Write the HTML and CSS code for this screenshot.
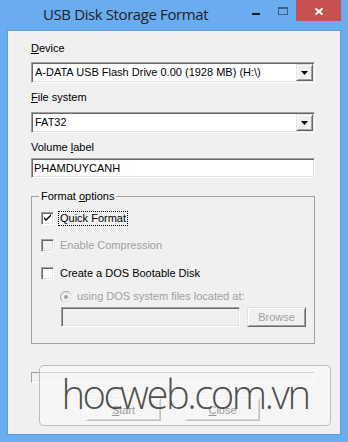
FILE: index.html
```html
<!DOCTYPE html>
<html>
<head>
<meta charset="utf-8">
<link rel="stylesheet" href="styles.css">
</head>
<body>
<div class="window">
  <div class="titlebar">
    <span class="title">USB Disk Storage Format</span>
    <div class="caption">
      <span class="cbtn min"><svg width="26" height="21"><rect x="8" y="13" width="8" height="2" fill="#1e1e1e"/></svg></span>
      <span class="cbtn max"><svg width="26" height="21"><rect x="8.5" y="7.5" width="9" height="7" fill="none" stroke="#3e5f86"/><rect x="8" y="7" width="10" height="2" fill="#3e5f86"/></svg></span>
      <span class="cbtn close"><svg width="45" height="21"><path d="M19.5 8.5 L26.5 14.5 M26.5 8.5 L19.5 14.5" stroke="#fff" stroke-width="2"/></svg></span>
    </div>
  </div>
  <div class="client">
    <div class="form">
      <div class="lbl"><u>D</u>evice</div>
      <div class="combo"><span class="val">A-DATA USB Flash Drive 0.00 (1928 MB) (H:\)</span><span class="drop"><svg width="7" height="4"><polygon points="0,0 7,0 3.5,4" fill="#000"/></svg></span></div>
      <div class="lbl gap8"><u>F</u>ile system</div>
      <div class="combo combo2"><span class="val">FAT32</span><span class="drop"><svg width="7" height="4"><polygon points="0,0 7,0 3.5,4" fill="#000"/></svg></span></div>
      <div class="lbl gap8">Volume <u>l</u>abel</div>
      <div class="textbox">PHAMDUYCANH</div>
      <fieldset class="group">
        <legend>Format <u>o</u>ptions</legend>
        <div class="opt">
          <span class="box"><svg width="9" height="9"><polygon points="1,3 1,5 3,7 8,2 8,0 3,5" fill="#000"/></svg></span>
          <span class="otext focus">Quick Format</span>
        </div>
        <div class="opt opt2 disabled">
          <span class="box boxdis"></span>
          <span class="otext">Enable Compression</span>
        </div>
        <div class="opt opt3">
          <span class="box"></span>
          <span class="otext">Create a DOS Bootable Disk</span>
        </div>
        <div class="radio-row disabled">
          <svg class="radio" width="12" height="12"><circle cx="6" cy="6" r="5.5" fill="#f0f0f0" stroke="#a0a0a0"/><path d="M10 2.5 A5 5 0 0 1 2.5 10" fill="none" stroke="#fff" stroke-width="1"/><circle cx="6" cy="6" r="2" fill="#a0a0a0"/></svg>
          <span>using DOS system files located at:</span>
        </div>
        <div class="path-row">
          <div class="textbox pathbox"></div>
          <div class="btn browse">Browse</div>
        </div>
      </fieldset>
      <div class="progress"></div>
      <div class="buttons">
        <div class="btn main"><u>S</u>tart</div>
        <div class="btn main"><u>C</u>lose</div>
      </div>
    </div>
  </div>
  <div class="watermark">hocweb.com.vn</div>
</div>
</body>
</html>
```
FILE: styles.css
```css
* { box-sizing: border-box; }
body {
  margin: 0;
  width: 348px;
  height: 442px;
  overflow: hidden;
  font-family: "Liberation Sans", Arial, sans-serif;
  font-size: 11px;
  color: #000;
}
.window {
  position: relative;
  width: 348px;
  height: 442px;
  background: #6aacf0;
  display: flex;
  flex-direction: column;
}
.titlebar {
  height: 30px;
  flex: none;
  display: flex;
  align-items: flex-start;
}
.title {
  font-family: "Open Sans", sans-serif;
  font-size: 15px;
  line-height: 21px;
  color: #222;
  padding-left: 43px;
  margin-top: 4px;
  letter-spacing: -0.4px;
}
.caption {
  margin-left: auto;
  margin-right: 7px;
  display: flex;
}
.cbtn { display: block; height: 21px; width: 26px; }
.cbtn svg { display: block; }
.cbtn.close { width: 45px; background: #c75050; }
.client {
  flex: 1;
  margin: 0 7px 7px;
  border: 1px solid #5d9ae0;
  background: #f0f0f0;
}
.form {
  width: 307px;
  padding: 11px 0 0 23px;
  display: flex;
  flex-direction: column;
}
.form > * { width: 284px; }
.lbl { line-height: 13px; height: 13px; }
.gap8 { margin-top: 8px; }
u { text-decoration: underline; text-underline-offset: 1px; }
.combo {
  height: 21px;
  margin-top: 7px;
  display: flex;
  align-items: center;
  background: #fff;
  border: 1px solid;
  border-color: #a0a0a0 #fff #fff #a0a0a0;
  box-shadow: inset 1px 1px 0 #696969, inset -1px -1px 0 #e3e3e3;
  padding: 1px;
}
.combo .val { flex: 1; padding-left: 2px; line-height: 13px; white-space: nowrap; }
.drop {
  width: 17px;
  height: 17px;
  background: #f0f0f0;
  border: 1px solid;
  border-color: #e3e3e3 #696969 #696969 #e3e3e3;
  box-shadow: inset 1px 1px 0 #fff, inset -1px -1px 0 #a0a0a0;
  display: flex;
  align-items: center;
  justify-content: center;
}
.drop svg { display: block; margin-top: 1px; }
.combo2 { margin-top: 8px; }
.textbox {
  height: 20px;
  margin-top: 4px;
  background: #fff;
  border: 1px solid;
  border-color: #a0a0a0 #fff #fff #a0a0a0;
  box-shadow: inset 1px 1px 0 #696969, inset -1px -1px 0 #e3e3e3;
  padding: 0 2px;
  line-height: 18px;
}
.group {
  margin: 12px 0 0;
  border: 1px solid #a0a0a0;
  padding: 8px 8px 16px 9px;
  min-width: 0;
}
.group legend {
  padding: 0 2px;
  margin-left: -2px;
  line-height: 13px;
}
.opt {
  display: flex;
  align-items: center;
  height: 15px;
}
.opt2 { margin-top: 12px; }
.opt3 { margin-top: 13px; }
.box {
  width: 13px;
  height: 13px;
  flex: none;
  background: #fff;
  border: 1px solid;
  border-color: #a0a0a0 #fff #fff #a0a0a0;
  box-shadow: inset 1px 1px 0 #696969, inset -1px -1px 0 #e3e3e3;
  padding: 1px;
  margin-right: 4px;
}
.box svg { display: block; }
.box.boxdis { background: #f0f0f0; }
.otext {
  border: 1px dotted transparent;
  padding: 0 1px;
  line-height: 13px;
}
.otext.focus { border-color: #000; }
.disabled { color: #a0a0a0; }
.radio-row {
  margin-top: 9px;
  padding-left: 19px;
  display: flex;
  align-items: center;
  height: 13px;
  line-height: 13px;
}
.radio { display: block; margin-right: 5px; flex: none; }
.path-row {
  margin-top: 4px;
  padding-left: 20px;
  display: flex;
  gap: 7px;
}
.pathbox { width: 179px; margin-top: 0; background: #f0f0f0; }
.btn {
  height: 20px;
  background: #f0f0f0;
  border: 1px solid;
  border-color: #e3e3e3 #696969 #696969 #e3e3e3;
  box-shadow: inset 1px 1px 0 #fff, inset -1px -1px 0 #a0a0a0;
  display: flex;
  align-items: center;
  justify-content: center;
}
.browse { width: 59px; color: #a0a0a0; }
.progress {
  height: 11px;
  margin-top: 28px;
  border: 1px solid;
  border-color: #a0a0a0 #fff #fff #a0a0a0;
}
.buttons {
  margin-top: 15px;
  display: flex;
  justify-content: center;
  gap: 24px;
}
.btn.main { width: 75px; height: 23px; }
.watermark {
  position: absolute;
  left: 39px;
  top: 365px;
  width: 292px;
  height: 61px;
  border-radius: 5px;
  border: 1px solid rgba(150, 150, 150, 0.6);
  background: rgba(250, 250, 250, 0.6);
  font-family: "Open Sans", sans-serif;
  font-weight: 300;
  font-size: 40px;
  letter-spacing: -2.5px;
  color: rgba(50, 50, 50, 0.85);
  display: flex;
  justify-content: center;
  align-items: center;
  line-height: 40px;
  padding-bottom: 4px;
}
```
